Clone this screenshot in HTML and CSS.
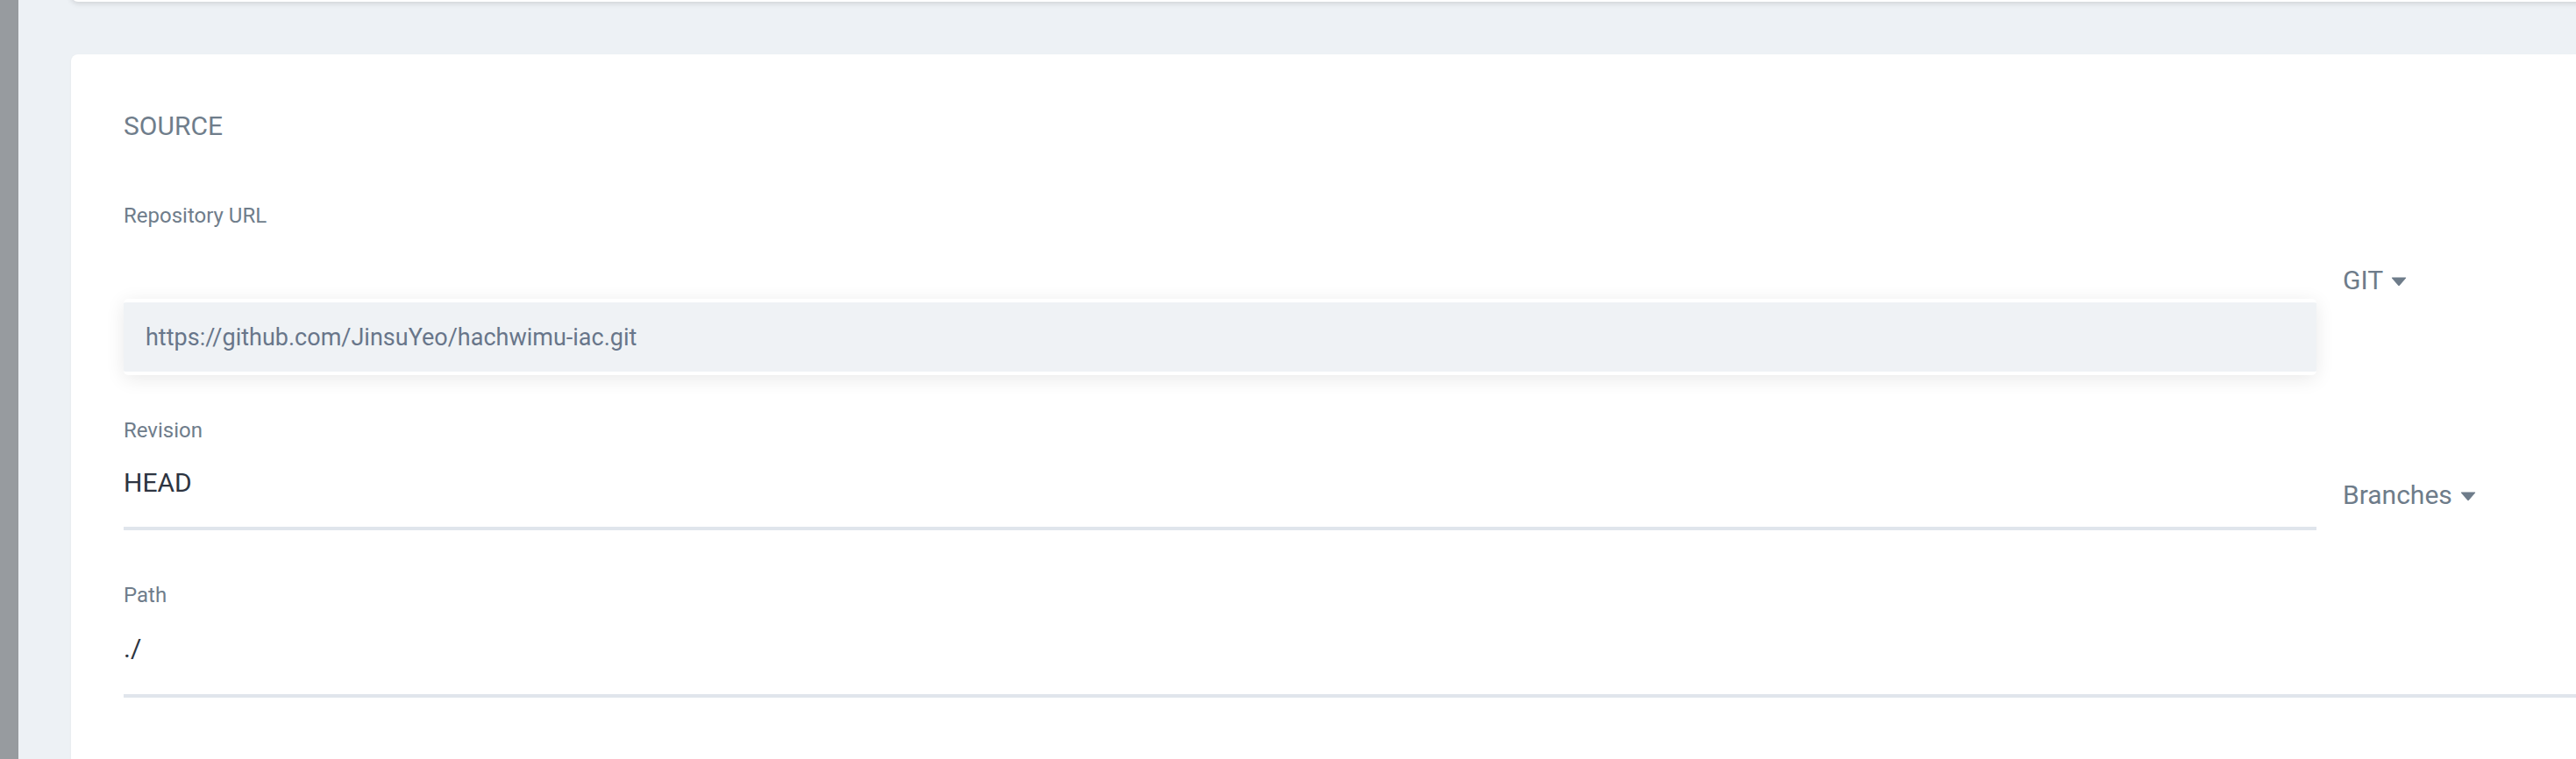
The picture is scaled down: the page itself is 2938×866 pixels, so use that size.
FILE: index.html
```html
<!DOCTYPE html>
<html lang="en">
<head>
<meta charset="utf-8">
<title>Source</title>
<link rel="stylesheet" href="styles.css">
</head>
<body>
<div class="layout">
  <div class="sidebar"></div>
  <div class="content">
    <div class="top-card"></div>
    <div class="card">
      <div class="section-title">SOURCE</div>

      <div class="row row-repo">
        <div class="field">
          <div class="label">Repository URL</div>
          <div class="input-focus">https://github.com/JinsuYeo/hachwimu-iac.git</div>
        </div>
        <div class="dropdown">
          <span>GIT</span>
          <svg class="caret" width="18" height="11" viewBox="0 0 18 11"><path d="M1.6 0.5 H16.4 Q17.8 0.5 16.9 1.6 L9.8 9.8 Q9 10.6 8.2 9.8 L1.1 1.6 Q0.2 0.5 1.6 0.5 Z" fill="#6e7c8a"/></svg>
        </div>
      </div>

      <div class="row row-revision">
        <div class="field">
          <div class="label">Revision</div>
          <div class="input-line">HEAD</div>
        </div>
        <div class="dropdown">
          <span>Branches</span>
          <svg class="caret" width="18" height="11" viewBox="0 0 18 11"><path d="M1.6 0.5 H16.4 Q17.8 0.5 16.9 1.6 L9.8 9.8 Q9 10.6 8.2 9.8 L1.1 1.6 Q0.2 0.5 1.6 0.5 Z" fill="#6e7c8a"/></svg>
        </div>
      </div>

      <div class="row row-path">
        <div class="field">
          <div class="label">Path</div>
          <div class="input-line path-input">./</div>
        </div>
      </div>
    </div>
  </div>
</div>
</body>
</html>
```

FILE: styles.css
```css
* { box-sizing: border-box; }

html, body {
  margin: 0;
  padding: 0;
  overflow: hidden;
  background: #edf1f5;
  font-family: Roboto, "Noto Sans", "Liberation Sans", sans-serif;
}

.layout {
  display: flex;
  align-items: stretch;
  height: 866px;
  overflow: hidden;
}

.sidebar {
  flex: 0 0 21px;
  background: #979b9f;
}

.content {
  flex: 0 0 auto;
  width: 3009px;
  padding-left: 60px;
}

.top-card {
  height: 100px;
  margin-top: -98px;
  background: #ffffff;
  border-radius: 0 0 8px 8px;
  box-shadow: 0 2px 6px rgba(0, 0, 0, 0.13);
}

.card {
  margin-top: 60px;
  background: #ffffff;
  border-radius: 8px;
  box-shadow: 0 1px 3px rgba(0, 0, 0, 0.05);
  padding: 64px 60px 0 60px;
  height: 860px;
}

.section-title {
  font-size: 30px;
  line-height: 36px;
  color: #6f7d8b;
}

.row {
  display: flex;
  align-items: flex-start;
}

.field {
  flex: 1 1 auto;
  min-width: 0;
}

.label {
  font-size: 24px;
  line-height: 28px;
  color: #6f7d8b;
}

.row-repo { margin-top: 70px; }
.row-revision { margin-top: 49px; }
.row-path { margin-top: 60px; }

.input-focus {
  margin-top: 81px;
  height: 87px;
  display: flex;
  align-items: center;
  padding-left: 25px;
  background: #eff2f5;
  border-top: 4px solid #ffffff;
  border-bottom: 4px solid #ffffff;
  border-radius: 5px;
  box-shadow: 0 4px 22px rgba(0, 0, 0, 0.09);
  font-size: 27px;
  line-height: 30px;
  color: #68768a;
}

.input-line {
  padding: 28px 0 32px 0;
  font-size: 30px;
  line-height: 36px;
  color: #2d3441;
  border-bottom: 4px solid #e0e5ec;
}

.path-input {
  padding-top: 29px;
  padding-bottom: 34px;
}

.dropdown {
  flex: 0 0 298px;
  margin-left: 30px;
  margin-top: 70px;
  display: flex;
  align-items: center;
  gap: 9px;
  font-size: 30px;
  line-height: 36px;
  color: #6e7c8a;
}

.caret {
  display: block;
  margin-top: 3px;
}
```
